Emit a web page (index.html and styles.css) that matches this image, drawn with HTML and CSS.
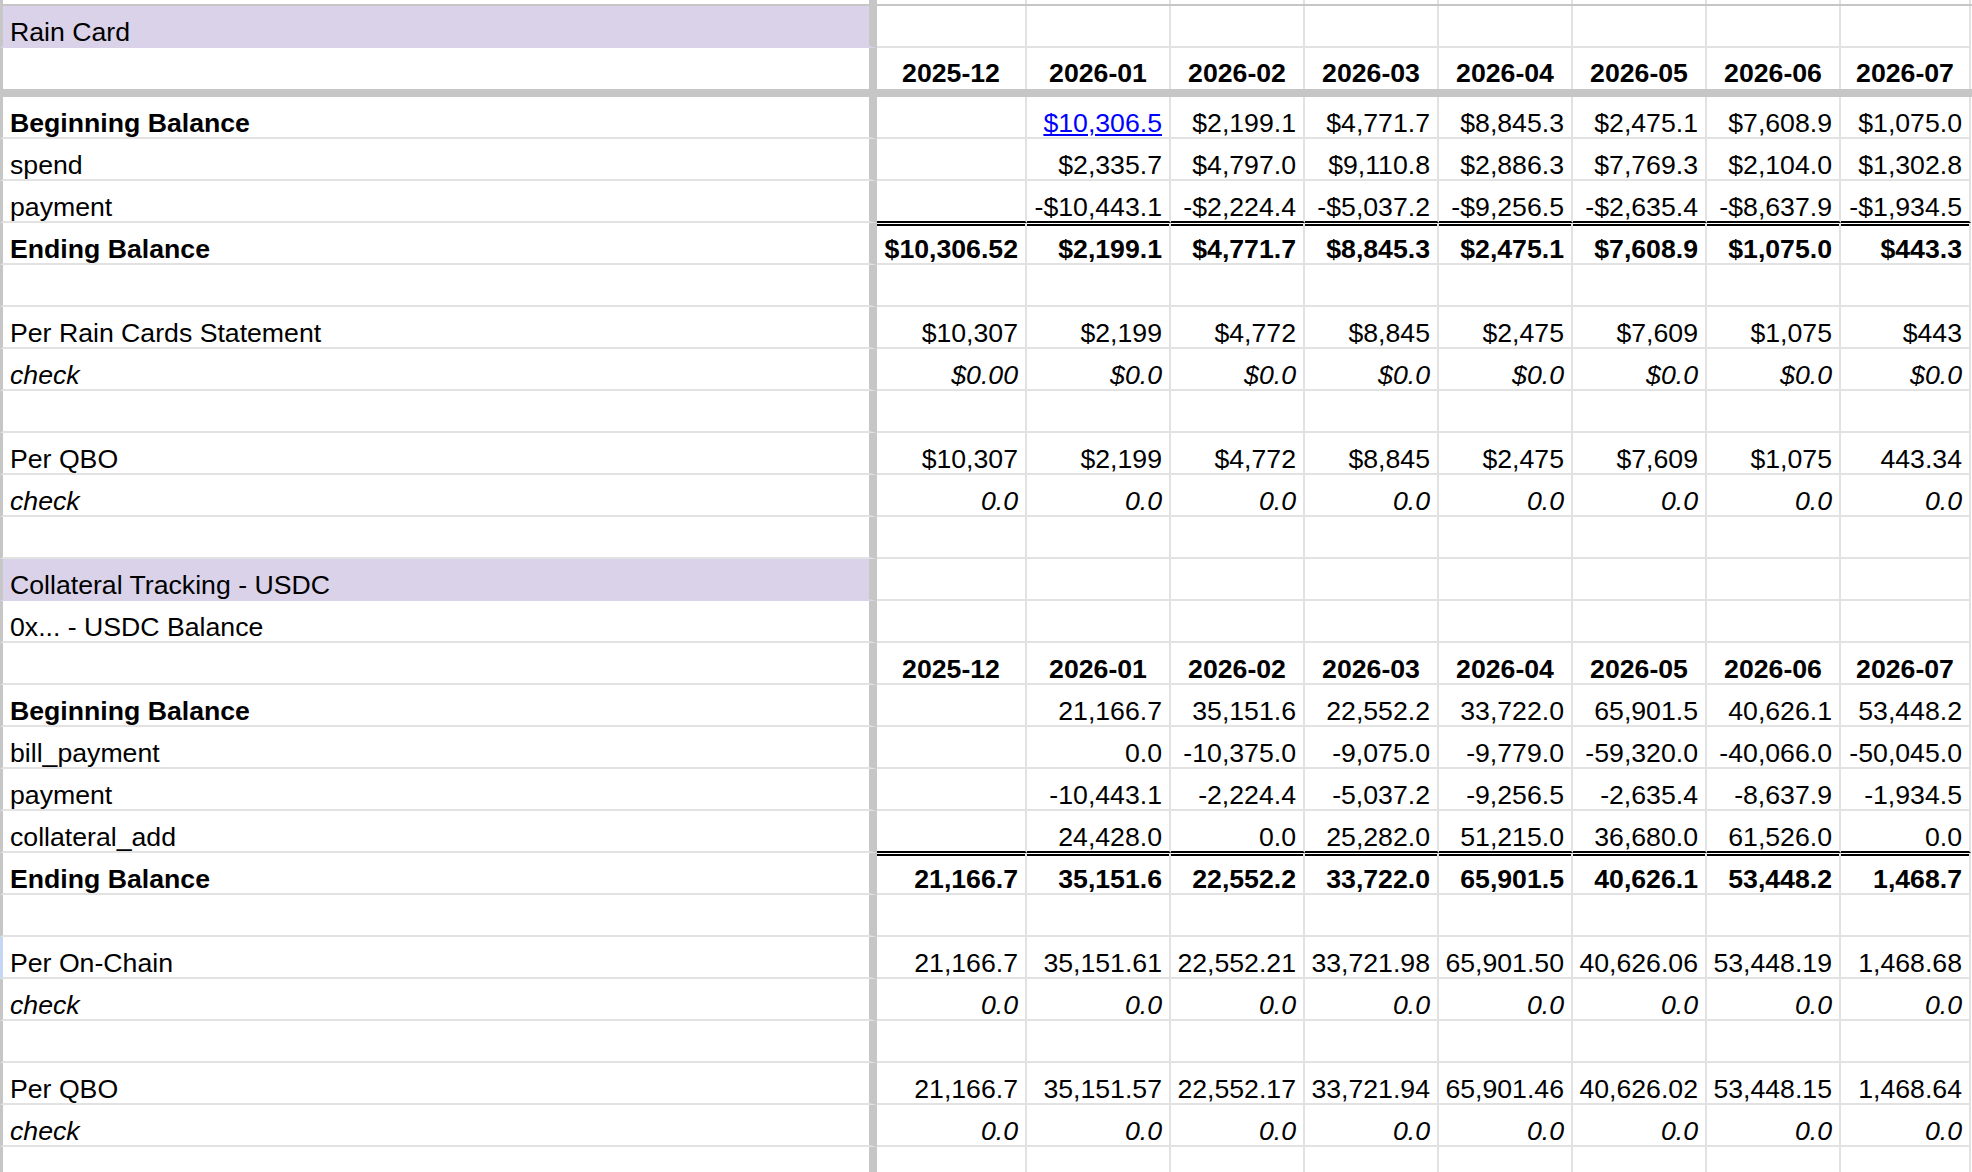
FILE: index.html
```html
<!DOCTYPE html>
<html lang="en">
<head>
<meta charset="utf-8">
<title>Rain Card</title>
<link rel="stylesheet" href="styles.css">
</head>
<body>
<div class="sheet">
  <div class="row stub"><div class="cell lab"></div><div class="cell"></div><div class="cell"></div><div class="cell"></div><div class="cell"></div><div class="cell"></div><div class="cell"></div><div class="cell"></div><div class="cell"></div></div>
  <div class="hline"></div>

  <div class="row"><div class="cell lab purple">Rain Card</div><div class="cell"></div><div class="cell"></div><div class="cell"></div><div class="cell"></div><div class="cell"></div><div class="cell"></div><div class="cell"></div><div class="cell"></div></div>
  <div class="row head"><div class="cell lab"></div><div class="cell hd">2025-12</div><div class="cell hd">2026-01</div><div class="cell hd">2026-02</div><div class="cell hd">2026-03</div><div class="cell hd">2026-04</div><div class="cell hd">2026-05</div><div class="cell hd">2026-06</div><div class="cell hd">2026-07</div></div>
  <div class="band"></div>

  <div class="row"><div class="cell lab b">Beginning Balance</div><div class="cell"></div><div class="cell"><span class="link">$10,306.5</span></div><div class="cell">$2,199.1</div><div class="cell">$4,771.7</div><div class="cell">$8,845.3</div><div class="cell">$2,475.1</div><div class="cell">$7,608.9</div><div class="cell">$1,075.0</div></div>
  <div class="row"><div class="cell lab">spend</div><div class="cell"></div><div class="cell">$2,335.7</div><div class="cell">$4,797.0</div><div class="cell">$9,110.8</div><div class="cell">$2,886.3</div><div class="cell">$7,769.3</div><div class="cell">$2,104.0</div><div class="cell">$1,302.8</div></div>
  <div class="row dbl-a"><div class="cell lab">payment</div><div class="cell"></div><div class="cell">-$10,443.1</div><div class="cell">-$2,224.4</div><div class="cell">-$5,037.2</div><div class="cell">-$9,256.5</div><div class="cell">-$2,635.4</div><div class="cell">-$8,637.9</div><div class="cell">-$1,934.5</div></div>
  <div class="row dbl-b b"><div class="cell lab">Ending Balance</div><div class="cell">$10,306.52</div><div class="cell">$2,199.1</div><div class="cell">$4,771.7</div><div class="cell">$8,845.3</div><div class="cell">$2,475.1</div><div class="cell">$7,608.9</div><div class="cell">$1,075.0</div><div class="cell">$443.3</div></div>
  <div class="row"><div class="cell lab"></div><div class="cell"></div><div class="cell"></div><div class="cell"></div><div class="cell"></div><div class="cell"></div><div class="cell"></div><div class="cell"></div><div class="cell"></div></div>
  <div class="row"><div class="cell lab">Per Rain Cards Statement</div><div class="cell">$10,307</div><div class="cell">$2,199</div><div class="cell">$4,772</div><div class="cell">$8,845</div><div class="cell">$2,475</div><div class="cell">$7,609</div><div class="cell">$1,075</div><div class="cell">$443</div></div>
  <div class="row i"><div class="cell lab">check</div><div class="cell">$0.00</div><div class="cell">$0.0</div><div class="cell">$0.0</div><div class="cell">$0.0</div><div class="cell">$0.0</div><div class="cell">$0.0</div><div class="cell">$0.0</div><div class="cell">$0.0</div></div>
  <div class="row"><div class="cell lab"></div><div class="cell"></div><div class="cell"></div><div class="cell"></div><div class="cell"></div><div class="cell"></div><div class="cell"></div><div class="cell"></div><div class="cell"></div></div>
  <div class="row"><div class="cell lab">Per QBO</div><div class="cell">$10,307</div><div class="cell">$2,199</div><div class="cell">$4,772</div><div class="cell">$8,845</div><div class="cell">$2,475</div><div class="cell">$7,609</div><div class="cell">$1,075</div><div class="cell">443.34</div></div>
  <div class="row i"><div class="cell lab">check</div><div class="cell">0.0</div><div class="cell">0.0</div><div class="cell">0.0</div><div class="cell">0.0</div><div class="cell">0.0</div><div class="cell">0.0</div><div class="cell">0.0</div><div class="cell">0.0</div></div>
  <div class="row"><div class="cell lab"></div><div class="cell"></div><div class="cell"></div><div class="cell"></div><div class="cell"></div><div class="cell"></div><div class="cell"></div><div class="cell"></div><div class="cell"></div></div>

  <div class="row"><div class="cell lab purple">Collateral Tracking - USDC</div><div class="cell"></div><div class="cell"></div><div class="cell"></div><div class="cell"></div><div class="cell"></div><div class="cell"></div><div class="cell"></div><div class="cell"></div></div>
  <div class="row"><div class="cell lab">0x... - USDC Balance</div><div class="cell"></div><div class="cell"></div><div class="cell"></div><div class="cell"></div><div class="cell"></div><div class="cell"></div><div class="cell"></div><div class="cell"></div></div>
  <div class="row"><div class="cell lab"></div><div class="cell hd">2025-12</div><div class="cell hd">2026-01</div><div class="cell hd">2026-02</div><div class="cell hd">2026-03</div><div class="cell hd">2026-04</div><div class="cell hd">2026-05</div><div class="cell hd">2026-06</div><div class="cell hd">2026-07</div></div>
  <div class="row"><div class="cell lab b">Beginning Balance</div><div class="cell"></div><div class="cell">21,166.7</div><div class="cell">35,151.6</div><div class="cell">22,552.2</div><div class="cell">33,722.0</div><div class="cell">65,901.5</div><div class="cell">40,626.1</div><div class="cell">53,448.2</div></div>
  <div class="row"><div class="cell lab">bill_payment</div><div class="cell"></div><div class="cell">0.0</div><div class="cell">-10,375.0</div><div class="cell">-9,075.0</div><div class="cell">-9,779.0</div><div class="cell">-59,320.0</div><div class="cell">-40,066.0</div><div class="cell">-50,045.0</div></div>
  <div class="row"><div class="cell lab">payment</div><div class="cell"></div><div class="cell">-10,443.1</div><div class="cell">-2,224.4</div><div class="cell">-5,037.2</div><div class="cell">-9,256.5</div><div class="cell">-2,635.4</div><div class="cell">-8,637.9</div><div class="cell">-1,934.5</div></div>
  <div class="row dbl-a"><div class="cell lab">collateral_add</div><div class="cell"></div><div class="cell">24,428.0</div><div class="cell">0.0</div><div class="cell">25,282.0</div><div class="cell">51,215.0</div><div class="cell">36,680.0</div><div class="cell">61,526.0</div><div class="cell">0.0</div></div>
  <div class="row dbl-b b"><div class="cell lab">Ending Balance</div><div class="cell">21,166.7</div><div class="cell">35,151.6</div><div class="cell">22,552.2</div><div class="cell">33,722.0</div><div class="cell">65,901.5</div><div class="cell">40,626.1</div><div class="cell">53,448.2</div><div class="cell">1,468.7</div></div>
  <div class="row"><div class="cell lab"></div><div class="cell"></div><div class="cell"></div><div class="cell"></div><div class="cell"></div><div class="cell"></div><div class="cell"></div><div class="cell"></div><div class="cell"></div></div>
  <div class="row"><div class="cell lab sel">Per On-Chain</div><div class="cell">21,166.7</div><div class="cell">35,151.61</div><div class="cell">22,552.21</div><div class="cell">33,721.98</div><div class="cell">65,901.50</div><div class="cell">40,626.06</div><div class="cell">53,448.19</div><div class="cell">1,468.68</div></div>
  <div class="row i"><div class="cell lab">check</div><div class="cell">0.0</div><div class="cell">0.0</div><div class="cell">0.0</div><div class="cell">0.0</div><div class="cell">0.0</div><div class="cell">0.0</div><div class="cell">0.0</div><div class="cell">0.0</div></div>
  <div class="row"><div class="cell lab"></div><div class="cell"></div><div class="cell"></div><div class="cell"></div><div class="cell"></div><div class="cell"></div><div class="cell"></div><div class="cell"></div><div class="cell"></div></div>
  <div class="row"><div class="cell lab">Per QBO</div><div class="cell">21,166.7</div><div class="cell">35,151.57</div><div class="cell">22,552.17</div><div class="cell">33,721.94</div><div class="cell">65,901.46</div><div class="cell">40,626.02</div><div class="cell">53,448.15</div><div class="cell">1,468.64</div></div>
  <div class="row i"><div class="cell lab">check</div><div class="cell">0.0</div><div class="cell">0.0</div><div class="cell">0.0</div><div class="cell">0.0</div><div class="cell">0.0</div><div class="cell">0.0</div><div class="cell">0.0</div><div class="cell">0.0</div></div>
  <div class="row"><div class="cell lab"></div><div class="cell"></div><div class="cell"></div><div class="cell"></div><div class="cell"></div><div class="cell"></div><div class="cell"></div><div class="cell"></div><div class="cell"></div></div>
</div>
</body>
</html>
```

FILE: styles.css
```css
html, body {
  margin: 0;
  padding: 0;
  background: #ffffff;
}

body {
  width: 1972px;
  height: 1172px;
  overflow: hidden;
  font-family: "Liberation Sans", Arial, sans-serif;
  font-size: 26.67px;
  color: #000000;
}

.sheet {
  display: flex;
  flex-direction: column;
}

.row {
  display: grid;
  grid-template-columns: 877px 150px 144px repeat(5, 134px) 130px;
  height: 42px;
  flex: none;
}

.cell {
  box-sizing: border-box;
  height: 100%;
  border-right: 2px solid #e2e2e2;
  border-bottom: 2px solid #e2e2e2;
  display: flex;
  align-items: flex-end;
  justify-content: flex-end;
  padding: 0 7px 0 7px;
  white-space: nowrap;
  overflow: hidden;
  line-height: 1;
}

.lab {
  border-left: 3px solid #c6c6c6;
  border-right: 8px solid #c6c6c6;
  justify-content: flex-start;
  padding-left: 7px;
}

.lab.sel {
  border-left-color: #c5d7f5;
}

.purple {
  background: #d9d2e9;
  border-bottom-color: #d9d2e9;
}

.stub {
  height: 4px;
}

.stub .cell {
  border-bottom: none;
  padding: 0;
}

.hline {
  height: 2px;
  background: #c6c6c6;
  flex: none;
}

.head {
  height: 41px;
}

.head .cell {
  border-bottom: none;
  padding-bottom: 2px;
}

.band {
  height: 8px;
  background: #c6c6c6;
  flex: none;
}

.hd {
  justify-content: center;
  font-weight: bold;
}

.b {
  font-weight: bold;
}

.i {
  font-style: italic;
}

.link {
  color: #0000ff;
  text-decoration: underline;
}

.dbl-a .cell:not(.lab) {
  border-bottom-color: #000000;
}

.dbl-b .cell:not(.lab) {
  box-shadow: inset 0 1px 0 #ffffff, inset 0 3px 0 #000000;
}
```
